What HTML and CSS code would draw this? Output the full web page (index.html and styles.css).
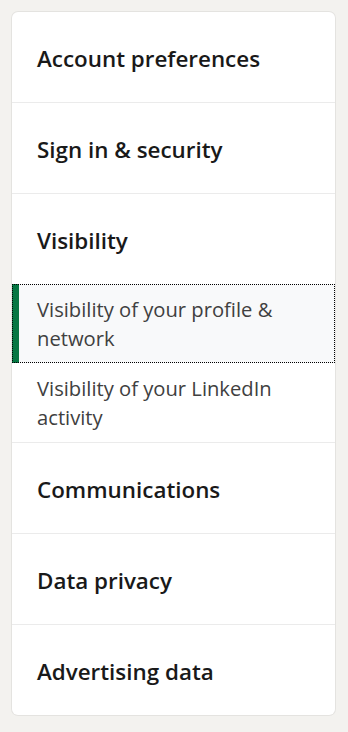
FILE: index.html
```html
<!DOCTYPE html>
<html lang="en">
<head>
<meta charset="utf-8">
<title>Settings</title>
<link rel="stylesheet" href="styles.css">
</head>
<body>
<nav class="card">
  <ul class="menu">
    <li class="section"><a class="section-link" href="#">Account preferences</a></li>
    <li class="section"><a class="section-link" href="#">Sign in &amp; security</a></li>
    <li class="section open">
      <a class="section-link" href="#">Visibility</a>
      <ul class="submenu">
        <li><a class="sub-link active" href="#">Visibility of your profile &amp; network</a></li>
        <li><a class="sub-link" href="#">Visibility of your LinkedIn activity</a></li>
      </ul>
    </li>
    <li class="section"><a class="section-link" href="#">Communications</a></li>
    <li class="section"><a class="section-link" href="#">Data privacy</a></li>
    <li class="section"><a class="section-link" href="#">Advertising data</a></li>
  </ul>
</nav>
</body>
</html>
```
FILE: styles.css
```css
html, body {
  margin: 0;
  padding: 0;
}
body {
  background: #f3f2ef;
  padding: 12px 13px 12px 12px;
  font-family: "Open Sans", "Noto Sans", sans-serif;
}
.card {
  background: #fff;
  border-radius: 6px;
  box-shadow: 0 0 0 1px rgba(0,0,0,0.06);
  overflow: hidden;
}
.menu, .submenu {
  list-style: none;
  margin: 0;
  padding: 0;
}
.section + .section {
  border-top: 1px solid #ebebeb;
}
.section-link {
  display: block;
  padding: 33px 20px 29px 25px;
  font-size: 22.4px;
  line-height: 28px;
  font-weight: 600;
  color: #191919;
  text-decoration: none;
}
.sub-link {
  display: block;
  padding: 11px 20px 10px 25px;
  font-size: 20.2px;
  line-height: 29px;
  color: #404040;
  text-decoration: none;
}
.sub-link.active {
  background: #f8f9fa;
  outline: 1px dotted #000;
  outline-offset: -1px;
  box-shadow: inset 7px 0 0 #057642;
}
```
